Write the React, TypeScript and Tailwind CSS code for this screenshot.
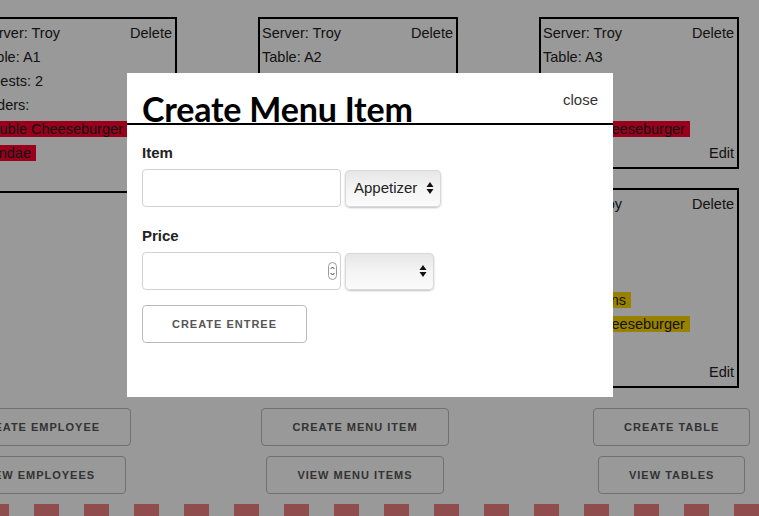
import React from "react";

type Order = { name: string; color: "red" | "gold" };

type Ticket = {
    server: string;
    table: string;
    guests: number;
    orders: Order[];
};

const columns: Ticket[][] = [
    [
        {
            server: "Troy",
            table: "A1",
            guests: 2,
            orders: [
                { name: "Double Cheeseburger", color: "red" },
                { name: "Sundae", color: "red" },
            ],
        },
    ],
    [
        {
            server: "Troy",
            table: "A2",
            guests: 3,
            orders: [{ name: "Fries", color: "red" }],
        },
    ],
    [
        {
            server: "Troy",
            table: "A3",
            guests: 2,
            orders: [{ name: "Double Cheeseburger", color: "red" }],
        },
        {
            server: "Troy",
            table: "A4",
            guests: 4,
            orders: [
                { name: "Fried Onions", color: "gold" },
                { name: "Double Cheeseburger", color: "gold" },
                { name: "Sundae", color: "gold" },
            ],
        },
    ],
];

function TicketCard({ ticket }: { ticket: Ticket }) {
    return (
        <div className="w-[200px] border-2 border-black pt-[2px] pb-[2px] pl-[2px] pr-[3px] text-[14.5px] leading-6 text-[#222]">
            <div className="flex justify-between">
                <span>Server: {ticket.server}</span>
                <span>Delete</span>
            </div>
            <div>Table: {ticket.table}</div>
            <div>Guests: {ticket.guests}</div>
            <div>Orders:</div>
            {ticket.orders.map((o, i) => (
                <div key={i}>
                    <span className={o.color === "red" ? "bg-[#ff0030] pr-[5px] whitespace-nowrap" : "bg-[#ffd700] pr-[5px] whitespace-nowrap"}>
                        {o.name}
                    </span>
                </div>
            ))}
            <div className="text-right">Edit</div>
        </div>
    );
}

function PageButton({ label }: { label: string }) {
    return (
        <button className="h-[38px] px-[30px] pt-[1px] rounded-[4px] border border-[#bbbbbb] text-[11px] font-bold tracking-[1px] uppercase text-[#555] whitespace-nowrap">
            {label}
        </button>
    );
}

function SelectArrows() {
    return (
        <svg width="8" height="14" viewBox="0 0 8 14" className="shrink-0">
            <path d="M4 1 L7.5 6 L0.5 6 Z" fill="#111" />
            <path d="M4 13 L7.5 8 L0.5 8 Z" fill="#111" />
        </svg>
    );
}

function Spinner() {
    return (
        <svg width="9" height="18" viewBox="0 0 9 18">
            <rect x="0.5" y="0.5" width="8" height="17" rx="4" fill="#fff" stroke="#9a9a9a" />
            <path d="M2.6 7 L4.5 5 L6.4 7" fill="none" stroke="#444" strokeWidth="1" />
            <path d="M2.6 11 L4.5 13 L6.4 11" fill="none" stroke="#444" strokeWidth="1" />
        </svg>
    );
}

function NativeSelect({ value, width }: { value: string; width: string }) {
    return (
        <div
            className={`${width} h-[37px] rounded-[5px] flex items-center justify-between pl-[9px] pr-[7px] text-[15px] text-[#222] bg-gradient-to-b from-[#e6e6e6] via-[#f4f4f4] to-[#fbfbfb] shadow-[inset_0_0_0_1px_#d9d9d9,0_1px_2px_rgba(0,0,0,0.25)]`}
        >
            <span>{value}</span>
            <SelectArrows />
        </div>
    );
}

export default function App() {
    return (
        <div className="relative h-[516px] w-full overflow-hidden bg-white font-['Liberation_Sans',Arial,sans-serif]">
            <div className="pt-[17px]">
                <div className="flex items-start gap-[81px] -ml-[23px]">
                    {columns.map((col, i) => (
                        <div key={i} className="flex flex-col gap-[19px]">
                            {col.map((t, j) => (
                                <TicketCard key={j} ticket={t} />
                            ))}
                        </div>
                    ))}
                </div>

                <div className="grid grid-cols-3 w-[950px] -ml-[120px] mt-[20px] gap-y-[10px] justify-items-center">
                    <PageButton label="Create Employee" />
                    <PageButton label="Create Menu Item" />
                    <PageButton label="Create Table" />
                    <PageButton label="View Employees" />
                    <PageButton label="View Menu Items" />
                    <PageButton label="View Tables" />
                </div>

                <div className="flex gap-[25px] -ml-[16px] mt-[10px]">
                    {Array.from({ length: 17 }).map((_, i) => (
                        <div key={i} className="w-[25px] h-[14px] shrink-0 bg-[#f08080]" />
                    ))}
                </div>
            </div>

            <div className="fixed inset-0 bg-black/40" />

            <div className="fixed left-[127px] top-[73px] w-[486px] h-[324px] bg-white text-[#222]">
                <div className="relative h-[52px] border-b-2 border-black px-[15px] flex items-end">
                    <h1 className="font-['Lato',sans-serif] font-bold text-[34px] leading-none -mb-[3px] tracking-[-0.2px] text-black">
                        Create Menu Item
                    </h1>
                    <span className="absolute top-[15px] right-[15px] text-[15px] leading-6 text-[#333]">close</span>
                </div>

                <div className="px-[15px] pt-[16px]">
                    <label className="block text-[15px] leading-6 font-bold mb-[4px]">Item</label>
                    <div className="flex items-center gap-[4px]">
                        <div className="w-[199px] h-[38px] rounded-[4px] border border-[#d1d1d1] bg-white" />
                        <NativeSelect value="Appetizer" width="w-[96px]" />
                    </div>

                    <label className="block text-[15px] leading-6 font-bold mt-[17px] mb-[4px]">Price</label>
                    <div className="flex items-center gap-[4px]">
                        <div className="w-[199px] h-[38px] rounded-[4px] border border-[#d1d1d1] bg-white flex items-center justify-end pr-[3px]">
                            <Spinner />
                        </div>
                        <NativeSelect value="" width="w-[89px]" />
                    </div>

                    <button className="mt-[15px] w-[165px] h-[38px] pt-[1px] rounded-[4px] border border-[#bbbbbb] text-[11px] font-bold tracking-[1px] uppercase text-[#555]">
                        Create Entree
                    </button>
                </div>
            </div>
        </div>
    );
}
